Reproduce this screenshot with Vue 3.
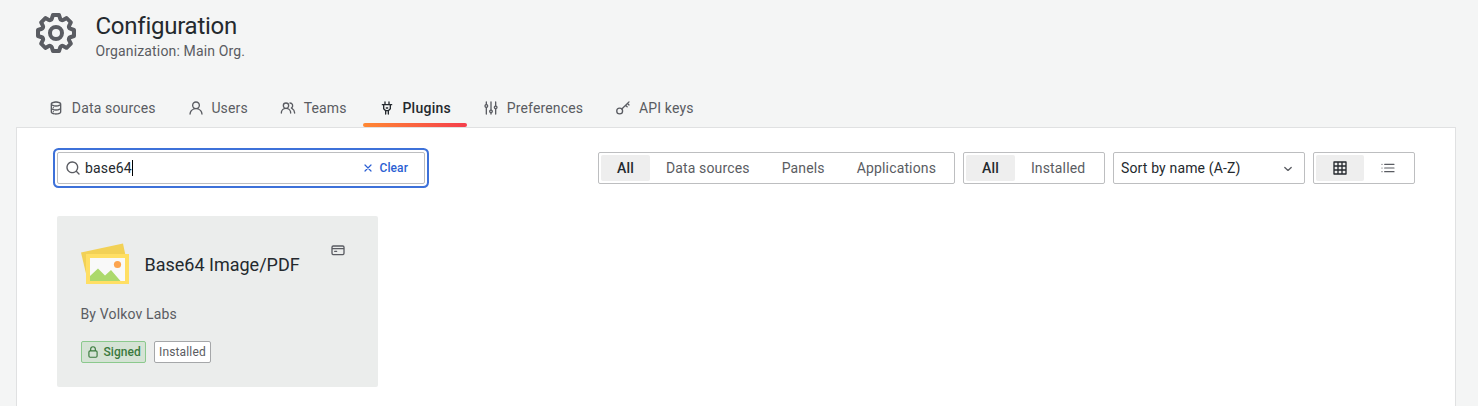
<script setup>
import { ref } from 'vue'

const icons = {
  setting: 'M21.32,9.55l-1.89-.63.89-1.78A1,1,0,0,0,20.13,6L18,3.87a1,1,0,0,0-1.15-.19l-1.78.89-.63-1.89A1,1,0,0,0,13.5,2h-3a1,1,0,0,0-.95.68L8.92,4.57,7.14,3.68A1,1,0,0,0,6,3.87L3.87,6a1,1,0,0,0-.19,1.15l.89,1.78-1.89.63A1,1,0,0,0,2,10.5v3a1,1,0,0,0,.68.95l1.89.63-.89,1.78A1,1,0,0,0,3.87,18L6,20.13a1,1,0,0,0,1.15.19l1.78-.89.63,1.89a1,1,0,0,0,.95.68h3a1,1,0,0,0,.95-.68l.63-1.89,1.78.89A1,1,0,0,0,18,20.13L20.13,18a1,1,0,0,0,.19-1.15l-.89-1.78,1.89-.63A1,1,0,0,0,22,13.5v-3A1,1,0,0,0,21.32,9.55ZM20,12.78l-1.2.4A2,2,0,0,0,17.64,16l.57,1.14-1.1,1.1L16,17.64a2,2,0,0,0-2.79,1.16l-.4,1.2H11.22l-.4-1.2A2,2,0,0,0,8,17.64l-1.14.57-1.1-1.1L6.36,16A2,2,0,0,0,5.2,13.18L4,12.78V11.22l1.2-.4A2,2,0,0,0,6.36,8L5.79,6.89l1.1-1.1L8,6.36A2,2,0,0,0,10.82,5.2l.4-1.2h1.56l.4,1.2A2,2,0,0,0,16,6.36l1.14-.57,1.1,1.1L17.64,8a2,2,0,0,0,1.16,2.79l1.2.4ZM12,8a4,4,0,1,0,4,4A4,4,0,0,0,12,8Zm0,6a2,2,0,1,1,2-2A2,2,0,0,1,12,14Z',
  database: 'M8,16.5a1,1,0,1,0,1,1A1,1,0,0,0,8,16.5ZM12,2C8,2,4,3.37,4,6V18c0,2.63,4,4,8,4s8-1.37,8-4V6C20,3.37,16,2,12,2Zm6,16c0,.71-2.28,2-6,2s-6-1.29-6-2V14.73A13.16,13.16,0,0,0,12,16a13.16,13.16,0,0,0,6-1.27Zm0-6c0,.71-2.28,2-6,2s-6-1.29-6-2V8.73A13.16,13.16,0,0,0,12,10a13.16,13.16,0,0,0,6-1.27ZM12,8C8.28,8,6,6.71,6,6s2.28-2,6-2,6,1.29,6,2S15.72,8,12,8ZM8,10.5a1,1,0,1,0,1,1A1,1,0,0,0,8,10.5Z',
  user: 'M15.71,12.71a6,6,0,1,0-7.42,0,10,10,0,0,0-6.22,8.18,1,1,0,0,0,2,.22,8,8,0,0,1,15.9,0,1,1,0,0,0,1,.89h.11a1,1,0,0,0,.88-1.1A10,10,0,0,0,15.71,12.71ZM12,12a4,4,0,1,1,4-4A4,4,0,0,1,12,12Z',
  users: 'M12.3,12.22A4.92,4.92,0,0,0,14,8.5a5,5,0,0,0-10,0,4.92,4.92,0,0,0,1.7,3.72A8,8,0,0,0,1,19.5a1,1,0,0,0,2,0,6,6,0,0,1,12,0,1,1,0,0,0,2,0A8,8,0,0,0,12.3,12.22ZM9,11.5a3,3,0,1,1,3-3A3,3,0,0,1,9,11.5Zm9.74.32A5,5,0,0,0,15,3.5a1,1,0,0,0,0,2,3,3,0,0,1,3,3,3,3,0,0,1-1.5,2.59,1,1,0,0,0-.5.84,1,1,0,0,0,.45.86l.39.26.13.07a7,7,0,0,1,4,6.38,1,1,0,0,0,2,0A9,9,0,0,0,18.74,11.82Z',
  plug: 'M19,6H16V3a1,1,0,0,0-2,0V6H10V3A1,1,0,0,0,8,3V6H5A1,1,0,0,0,5,8H6v5a1,1,0,0,0,.29.71L9,16.41V21a1,1,0,0,0,2,0V17h2v4a1,1,0,0,0,2,0V16.41l2.71-2.7A1,1,0,0,0,18,13V8h1a1,1,0,0,0,0-2Zm-3,6.59L13.59,15H10.41L8,12.59V8h8ZM11,13h2a1,1,0,0,0,0-2H11a1,1,0,0,0,0,2Z',
  sliders: 'M20,8.18V3a1,1,0,0,0-2,0V8.18a3,3,0,0,0,0,5.64V21a1,1,0,0,0,2,0V13.82a3,3,0,0,0,0-5.64ZM19,12a1,1,0,1,1,1-1A1,1,0,0,1,19,12Zm-6,2.18V3a1,1,0,0,0-2,0V14.18a3,3,0,0,0,0,5.64V21a1,1,0,0,0,2,0V19.82a3,3,0,0,0,0-5.64ZM12,18a1,1,0,1,1,1-1A1,1,0,0,1,12,18ZM6,6.18V3A1,1,0,0,0,4,3V6.18a3,3,0,0,0,0,5.64V21a1,1,0,0,0,2,0V11.82A3,3,0,0,0,6,6.18ZM5,10A1,1,0,1,1,6,9,1,1,0,0,1,5,10Z',
  search: 'M21.71,20.29,18,16.61A9,9,0,1,0,16.61,18l3.68,3.68a1,1,0,0,0,1.42,0A1,1,0,0,0,21.71,20.29ZM11,18a7,7,0,1,1,7-7A7,7,0,0,1,11,18Z',
  lock: 'M17,9V7A5,5,0,0,0,7,7V9a3,3,0,0,0-3,3v7a3,3,0,0,0,3,3H17a3,3,0,0,0,3-3V12A3,3,0,0,0,17,9ZM9,7a3,3,0,0,1,6,0V9H9Zm9,12a1,1,0,0,1-1,1H7a1,1,0,0,1-1-1V12a1,1,0,0,1,1-1H17a1,1,0,0,1,1,1Z',
  card: 'M7,15h3a1,1,0,0,0,0-2H7a1,1,0,0,0,0,2ZM19,5H5A3,3,0,0,0,2,8v9a3,3,0,0,0,3,3H19a3,3,0,0,0,3-3V8A3,3,0,0,0,19,5Zm1,12a1,1,0,0,1-1,1H5a1,1,0,0,1-1-1V11H20Zm0-8H4V8A1,1,0,0,1,5,7H19a1,1,0,0,1,1,1Z',
  table: 'M21,2H3A1,1,0,0,0,2,3V21a1,1,0,0,0,1,1H21a1,1,0,0,0,1-1V3A1,1,0,0,0,21,2ZM8,20H4V16H8Zm0-6H4V10H8ZM8,8H4V4H8Zm6,12H10V16h4Zm0-6H10V10h4Zm0-6H10V4h4Zm6,12H16V16h4Zm0-6H16V10h4Zm0-6H16V4h4Z',
}

const tabs = [
  { label: 'Data sources', icon: 'database' },
  { label: 'Users', icon: 'user' },
  { label: 'Teams', icon: 'users' },
  { label: 'Plugins', icon: 'plug' },
  { label: 'Preferences', icon: 'sliders' },
  { label: 'API keys', icon: 'key' },
]
const activeTab = ref('Plugins')
const types = ['All', 'Data sources', 'Panels', 'Applications']
const activeType = ref('All')
const states = ['All', 'Installed']
const activeState = ref('All')
const query = ref('base64')
</script>

<template>
  <div class="page">
    <header class="header">
      <svg class="cog" viewBox="0 0 24 24"><path :d="icons.setting" /></svg>
      <div>
        <h1>Configuration</h1>
        <div class="sub">Organization: Main Org.</div>
      </div>
    </header>

    <nav class="tabs">
      <a v-for="t in tabs" :key="t.label" class="tab" :class="{ active: t.label === activeTab }" @click="activeTab = t.label">
        <svg v-if="t.icon === 'key'" class="ic" viewBox="0 0 24 24" fill="none" stroke="currentColor" stroke-width="2" stroke-linecap="round">
          <circle cx="7" cy="16.5" r="4.4" />
          <path d="M10.2 13.4L21 2.8M16 7.8l2.3 2.5M18.6 5.2l2.5 2.2" />
        </svg>
        <svg v-else class="ic" viewBox="0 0 24 24"><path :d="icons[t.icon]" /></svg>
        <span>{{ t.label }}</span>
      </a>
    </nav>

    <main class="content">
      <div class="toolbar">
        <div class="search">
          <svg class="ic" viewBox="0 0 24 24"><path :d="icons.search" /></svg>
          <span class="query">{{ query }}</span><i class="caret"></i>
          <button class="clear" @click="query = ''">
            <svg viewBox="0 0 14 14"><path d="M4 4l6 6M10 4l-6 6" /></svg>
            <span>Clear</span>
          </button>
        </div>

        <div class="filters">
          <div class="group types">
            <span v-for="t in types" :key="t" class="opt" :class="{ on: t === activeType }" @click="activeType = t">{{ t }}</span>
          </div>
          <div class="group states">
            <span v-for="s in states" :key="s" class="opt" :class="{ on: s === activeState }" @click="activeState = s">{{ s }}</span>
          </div>
          <div class="select">
            <span>Sort by name (A-Z)</span>
            <svg class="ic" viewBox="0 0 24 24" fill="none" stroke="currentColor" stroke-width="2" stroke-linecap="round" stroke-linejoin="round"><path d="M7.2 11.2l4.8 4.4 4.8-4.4" /></svg>
          </div>
          <div class="group views">
            <span class="opt on"><svg class="ic" viewBox="0 0 24 24"><path :d="icons.table" /></svg></span>
            <span class="opt">
              <svg class="ic" viewBox="0 0 24 24" fill="none" stroke="currentColor" stroke-width="1.8" stroke-linecap="round">
                <path d="M3 6.5h.01M3 12h.01M3 17.5h.01M7 6.5h14M7 12h14M7 17.5h14" />
              </svg>
            </span>
          </div>
        </div>
      </div>

      <article class="card">
        <div class="top">
          <svg class="logo" viewBox="0 0 48 48">
            <path fill="#f2d156" d="M0 12.5L42 3.5L48 32L7 42Z" />
            <path fill="#ffdf64" d="M5 14h43v30H5z" />
            <path fill="#f9f9f9" d="M9 18h35v23H9z" />
            <path fill="#acd96c" d="M9 36l8-7.6 7 7.2 6-5.6 9.5 11H9z" />
            <circle cx="36.5" cy="24.5" r="3.6" fill="#fca44f" />
          </svg>
          <h2>Base64 Image/PDF</h2>
          <svg class="ic type" viewBox="0 0 24 24"><path :d="icons.card" /></svg>
        </div>
        <p class="by">By Volkov Labs</p>
        <div class="badges">
          <span class="badge signed"><svg viewBox="0 0 24 24"><path :d="icons.lock" /></svg>Signed</span>
          <span class="badge">Installed</span>
        </div>
      </article>
    </main>
  </div>
</template>

<style>
body { background: #f4f5f5; overflow: hidden; }
</style>

<style scoped>
* { box-sizing: border-box; }
.page {
  height: 406px;
  padding: 9px 22px 0 16px;
  display: flex;
  flex-direction: column;
  background: #f4f5f5;
  color: #5a5c62;
  font: 14px/22px Roboto, "Liberation Sans", sans-serif;
  letter-spacing: 0.15px;
}
svg { fill: currentColor; flex: none; display: block; }
svg[fill="none"] { fill: none; }
.ic { width: 16px; height: 16px; }
.header { display: flex; height: 80px; padding-left: 16px; }
.cog { width: 48px; height: 48px; margin-right: 15.5px; }
h1 { margin: 2px 0 0; font-size: 24px; line-height: 30px; font-weight: 400; color: #24292e; letter-spacing: -0.25px; }
.sub { line-height: 20px; }
.tabs { display: flex; height: 38px; padding-left: 16px; }
.tab { display: flex; align-items: center; gap: 7.8px; padding: 0 16px; height: 38px; position: relative; }
.tab.active { color: #24292e; font-weight: 500; letter-spacing: 0.25px; }
.tab.active::after {
  content: ""; position: absolute; left: 0; right: 0; bottom: 0; height: 4px; border-radius: 2px;
  background: linear-gradient(90deg, #ff8833, #f53e4c);
}
.content { flex: 1; background: #fff; border: 1px solid #e0e1e2; border-bottom: 0; padding: 24px 40px 0; }
.toolbar { display: flex; justify-content: space-between; height: 32px; }
.search {
  width: 368px; height: 32px; display: flex; align-items: center; padding: 0 16px 0 7px;
  border: 1px solid #bdbec0; border-radius: 2px; background: #fff;
  box-shadow: 0 0 0 2px #fff, 0 0 0 4px #3d71d9;
}
.query { margin-left: 4px; color: #24292e; letter-spacing: 0.15px; }
.caret { width: 1px; height: 16px; background: #000; }
.clear {
  margin-left: auto; display: flex; align-items: center; gap: 4px; padding: 0; border: 0; background: none;
  color: #2b5fd3; font: 500 12px/22px Roboto, sans-serif; letter-spacing: 0.1px;
}
.clear svg { width: 14px; height: 14px; stroke: currentColor; stroke-width: 1.2; fill: none; stroke-linecap: round; }
.filters { display: flex; gap: 8px; }
.group { display: flex; height: 32px; padding: 2px; border: 1px solid #bdbec0; border-radius: 2px; background: #fff; }
.opt { display: flex; align-items: center; justify-content: center; padding: 0 16px; border-radius: 2px; white-space: nowrap; }
.opt.on { background: #eeeeee; color: #24292e; font-weight: 500; }
.types { width: 357px; }
.states { width: 142px; }
.views { width: 102px; }
.select {
  width: 192px; height: 32px; display: flex; align-items: center; justify-content: space-between;
  padding: 0 8px 0 7px; border: 1px solid #bdbec0; border-radius: 2px; color: #24292e; white-space: nowrap;
}
.select svg { color: #5a5c62; }
.card { width: 321px; height: 171px; margin-top: 32px; padding: 24px; border-radius: 2px; background: #ebedec; }
.top { display: flex; align-items: center; height: 48px; }
.logo { width: 48px; height: 48px; }
h2 { margin: 2px 0 0 15.5px; font-size: 18px; line-height: 22px; font-weight: 400; color: #24292e; letter-spacing: 0; white-space: nowrap; }
.type { margin: 2px 8px 0 auto; align-self: flex-start; }
.by { margin: 15px 0 0 -0.5px; line-height: 22px; }
.badges { display: flex; gap: 8px; margin-top: 16px; }
.badge {
  display: flex; align-items: center; height: 22px; padding: 0 4px; border: 1px solid #a5a7a9; border-radius: 2px;
  background: #fff; font-size: 12px; letter-spacing: 0.15px; color: #5a5c62;
}
.signed { width: 65px; background: #d5e3d5; border-color: #8bc98d; color: #3a7a3d; font-weight: 500; letter-spacing: 0.05px; }
.signed svg { width: 14px; height: 14px; margin-right: 3.5px; }
</style>
